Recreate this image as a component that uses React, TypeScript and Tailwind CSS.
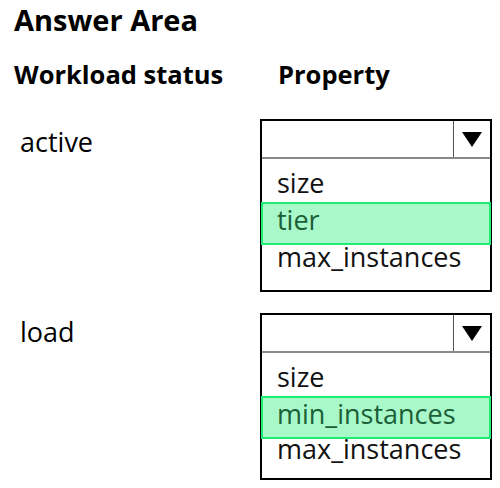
const rows = [
  { status: 'active', options: ['size', 'tier', 'max_instances'], picked: 1, labelPad: 'pt-[8px]', tail: 'pb-[15px]', lastShift: '-mt-[7px]' },
  { status: 'load', options: ['size', 'min_instances', 'max_instances'], picked: 1, labelPad: 'pt-[4px]', tail: 'pb-[11px]', lastShift: '-mt-[9px]' },
]

type DropdownProps = { options: string[]; picked: number; tail: string; lastShift: string }

function Dropdown({ options, picked, tail, lastShift }: DropdownProps) {
  return (
    <div className="w-[232px] border-2 border-black bg-white">
      {/* closed select header */}
      <div className="flex h-[38px] border-b-2 border-[#8a8a8a]">
        <div className="flex-1" />
        <div className="flex w-[37px] items-center justify-center border-l border-[#555]">
          <svg width="20" height="15" viewBox="0 0 20 15">
            <polygon points="0,0 20,0 10,15" fill="#000" />
          </svg>
        </div>
      </div>
      {/* option list */}
      <div className={`pt-[5px] ${tail}`}>
        {options.map((opt, i) =>
          i === picked ? (
            <div
              key={opt}
              className="-mx-px mt-px h-[43px] border-2 border-[#20ec74] bg-[#a8f8c9] pl-[14px] leading-[32px] text-[#1b5e37]"
            >
              {opt}
            </div>
          ) : (
            <div
              key={opt}
              className={`pl-[15px] leading-[37px] text-[#111] ${i === options.length - 1 ? lastShift : ''}`}
            >
              {opt}
            </div>
          ),
        )}
      </div>
    </div>
  )
}

export default function App() {
  return (
    <div className="h-[488px] w-[500px] bg-white font-['Open_Sans',sans-serif] text-black">
      <h1 className="pl-[14px] text-[29px] font-bold leading-[40px]">Answer Area</h1>
      <div className="mt-[17px] flex text-[25.5px] font-bold leading-[34px]">
        <div className="w-[278px] pl-[14px]">Workload status</div>
        <div>Property</div>
      </div>
      <div className="mt-[28px] flex flex-col gap-[21px]">
        {rows.map((row) => (
          <div key={row.status} className="flex text-[27px]">
            <div className={`w-[260px] pl-[20px] leading-[30px] ${row.labelPad}`}>{row.status}</div>
            <Dropdown options={row.options} picked={row.picked} tail={row.tail} lastShift={row.lastShift} />
          </div>
        ))}
      </div>
    </div>
  )
}
